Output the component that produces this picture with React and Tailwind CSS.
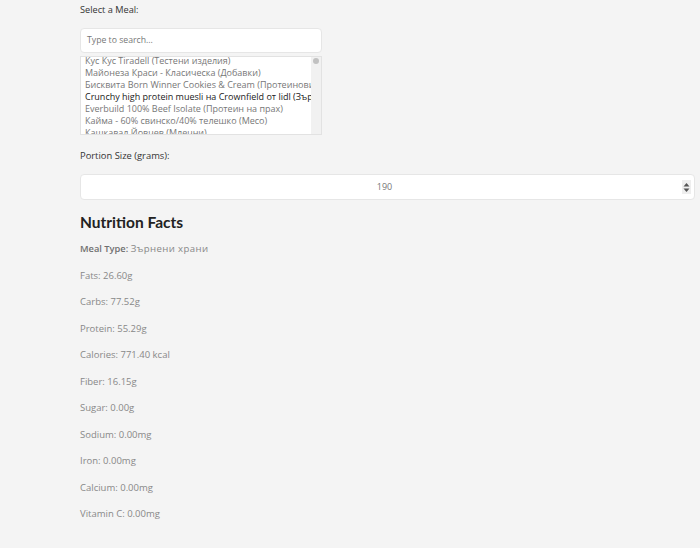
import React from "react";

const items = [
  { t: "Кус Кус Tiradell (Тестени изделия)" },
  { t: "Майонеза Краси - Класическа (Добавки)" },
  { t: "Бисквита Born Winner Cookies & Cream (Протеинови барчета)" },
  { t: "Crunchy high protein muesli на Crownfield от lidl (Зърнени храни)", sel: true },
  { t: "Everbuild 100% Beef Isolate (Протеин на прах)" },
  { t: "Кайма - 60% свинско/40% телешко (Месо)" },
  { t: "Кашкавал Йовчев (Млечни)" },
];

const rows = [
  "Fats: 26.60g",
  "Carbs: 77.52g",
  "Protein: 55.29g",
  "Calories: 771.40 kcal",
  "Fiber: 16.15g",
  "Sugar: 0.00g",
  "Sodium: 0.00mg",
  "Iron: 0.00mg",
  "Calcium: 0.00mg",
  "Vitamin C: 0.00mg",
];

export default function App() {
  return (
    <div
      className="min-h-[548px] w-[700px] bg-[#f4f4f4] pl-[80px] pr-[5px] pt-[3px]"
      style={{ fontFamily: '"Open Sans", sans-serif' }}
    >
      <div className="text-[9.2px] leading-[14px] text-[#333]">Select a Meal:</div>
      <div className="mt-[11px] w-[242px]">
        <div className="h-[25px] rounded-[4px] border border-[#e6e6e6] bg-white pl-[6px] text-[8.7px] leading-[23px] text-[#777]">
          Type to search...
        </div>
        <div className="mt-[3px] flex h-[79px] overflow-hidden border border-[#e2e2e2] bg-white">
          <div className="flex-1 overflow-hidden pl-[4px]">
            <div className="-mt-[2px]">
              {items.map((it, i) => (
                <div
                  key={i}
                  className={
                    "whitespace-nowrap text-[9px] leading-[12px] " +
                    (it.sel ? "text-[#222]" : "text-[#777]")
                  }
                >
                  {it.t}
                </div>
              ))}
            </div>
          </div>
          <div className="flex w-[10px] flex-col items-center bg-[#f1f1f1] pt-[1px]">
            <div className="h-[6px] w-[6px] rounded-full bg-[#c1c1c1]" />
          </div>
        </div>
      </div>
      <div className="mt-[14px] text-[9.4px] leading-[14px] text-[#333]">Portion Size (grams):</div>
      <div className="mt-[11px] flex h-[26px] items-center rounded-[4px] border border-[#e6e6e6] bg-white">
        <div className="flex-1 pl-[6px] text-center text-[9px] text-[#777]">190</div>
        <div className="mr-[3px] flex h-[14px] w-[9px] flex-col items-center justify-center gap-[1px] bg-[#eeeeee]">
          <svg width="7" height="5" viewBox="0 0 7 5"><path d="M0.5 4.5 L3.5 1 L6.5 4.5Z" fill="#555" /></svg>
          <svg width="7" height="5" viewBox="0 0 7 5"><path d="M0.5 0.5 L3.5 4 L6.5 0.5Z" fill="#555" /></svg>
        </div>
      </div>
      <h2
        className="mt-[12px] text-[15.5px] font-bold leading-[20px] text-[#222]"
        style={{ fontFamily: "Lato, sans-serif" }}
      >
        Nutrition Facts
      </h2>
      <div className="mt-[10px] text-[9.3px] leading-[14px] text-[#888]">
        <span className="font-semibold text-[#6f6f6f]">Meal Type:</span>{" "}
        <span className="text-[9.6px] tracking-[0.4px]">Зърнени храни</span>
      </div>
      {rows.map((r) => (
        <div key={r} className="mt-[12.5px] text-[9.5px] leading-[14px] text-[#888]">
          {r}
        </div>
      ))}
    </div>
  );
}
